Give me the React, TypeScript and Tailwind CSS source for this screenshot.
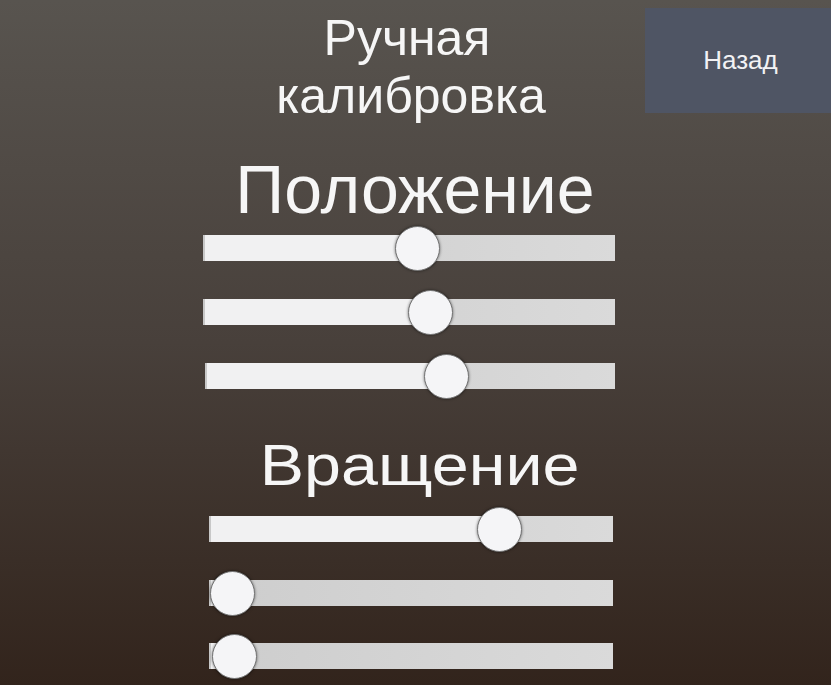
import React from "react";

type SliderProps = { pct: number; width: number; offset?: number; mt: number };

function Slider({ pct, width, offset = 0, mt }: SliderProps) {
  const center = pct * width;
  return (
    <div
      className="relative h-[46px] flex items-center"
      style={{ width, marginLeft: offset, marginTop: mt }}
    >
      <div className="relative h-[26px] w-full bg-gradient-to-r from-[#cdcdcd] to-[#dadada]">
        <div
          className="h-full bg-[#f1f1f2] border-l-2 border-[#c8c8c8]"
          style={{ width: center }}
        />
      </div>
      <div
        className="absolute top-[0.5px] h-[45px] w-[45px] rounded-full bg-[#f5f5f7] border-[1.5px] border-[#747474] shadow-[0_0_3px_rgba(0,0,0,0.55)]"
        style={{ left: center - 22.5 }}
      />
    </div>
  );
}

export default function App() {
  return (
    <div
      className="w-[831px] h-[685px] overflow-hidden bg-gradient-to-b from-[#58544f] via-[#48403b] to-[#32241c] text-[#f6f6f6] flex"
      style={{ fontFamily: '"Liberation Sans", Arial, sans-serif' }}
    >
      <div className="w-[203px] shrink-0" />
      <div className="w-[412px] shrink-0 flex flex-col">
        <div className="pt-[9px] text-center text-[50px] leading-[58px]">
          <div className="pr-[4px]">Ручная</div>
          <div className="pl-[4px]">калибровка</div>
        </div>
        <div className="mt-[30px] h-[68px] text-center text-[68px] leading-[68px] pl-[12px]">
          Положение
        </div>
        <Slider pct={0.52} width={412} mt={2} />
        <Slider pct={0.553} width={412} mt={18} />
        <Slider pct={0.589} width={410} offset={2} mt={18} />
        <div className="mt-[37px] h-[58px] flex justify-center pl-[22px]">
          <div className="text-[58px] leading-[58px] scale-x-[1.145]">Вращение</div>
        </div>
        <Slider pct={0.718} width={404} offset={6} mt={12} />
        <Slider pct={0.059} width={404} offset={6} mt={18} />
        <Slider pct={0.064} width={404} offset={6} mt={17} />
      </div>
      <div className="flex-1 pl-[30px] pt-[8px]">
        <div className="h-[105px] w-full bg-[#4f5564] flex items-center justify-center text-[26px] text-[#f2f2f4] pl-[5px]">
          Назад
        </div>
      </div>
    </div>
  );
}
